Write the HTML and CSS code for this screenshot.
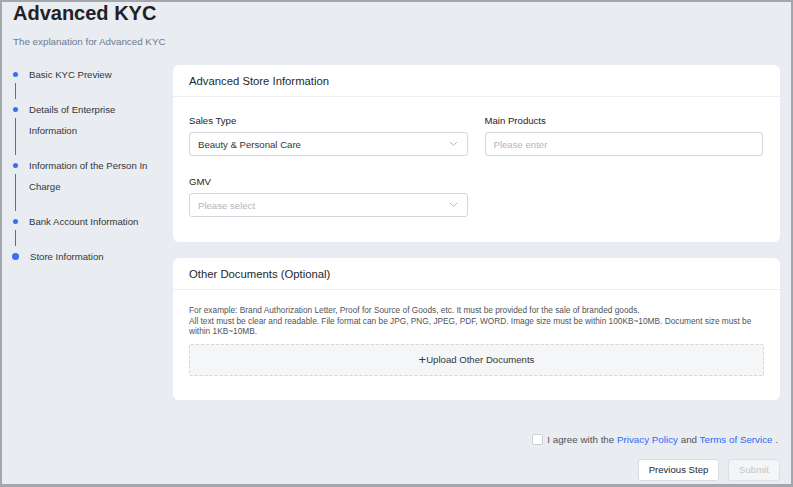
FILE: index.html
```html
<!DOCTYPE html>
<html lang="en">
<head>
  <meta charset="utf-8">
  <meta name="viewport" content="width=device-width, initial-scale=1.0">
  <title>Advanced KYC</title>
  <link rel="stylesheet" href="styles.css">
</head>
<body>
  <div class="page">
    <h1 class="title">Advanced KYC</h1>
    <p class="subtitle">The explanation for Advanced KYC</p>

    <div class="layout">
      <ul class="steps">
        <li class="step">
          <div class="marker"><span class="dot"></span><span class="tail"></span></div>
          <div class="step-text">Basic KYC Preview</div>
        </li>
        <li class="step">
          <div class="marker"><span class="dot"></span><span class="tail"></span></div>
          <div class="step-text">Details of Enterprise Information</div>
        </li>
        <li class="step">
          <div class="marker"><span class="dot"></span><span class="tail"></span></div>
          <div class="step-text">Information of the Person In Charge</div>
        </li>
        <li class="step">
          <div class="marker"><span class="dot"></span><span class="tail"></span></div>
          <div class="step-text">Bank Account Information</div>
        </li>
        <li class="step active">
          <div class="marker"><span class="dot"></span></div>
          <div class="step-text">Store Information</div>
        </li>
      </ul>

      <main class="main">
        <section class="card">
          <div class="card-header">Advanced Store Information</div>
          <div class="card-body form-grid">
            <div class="field">
              <label class="label">Sales Type</label>
              <div class="select">
                <span>Beauty &amp; Personal Care</span>
                <svg class="arrow" width="9" height="6" viewBox="0 0 9 6"><path d="M1 1l3.5 3.5L8 1" fill="none" stroke="#b4b8c0" stroke-width="1"/></svg>
              </div>
            </div>
            <div class="field">
              <label class="label">Main Products</label>
              <div class="input placeholder">Please enter</div>
            </div>
            <div class="field">
              <label class="label">GMV</label>
              <div class="select placeholder">
                <span>Please select</span>
                <svg class="arrow" width="9" height="6" viewBox="0 0 9 6"><path d="M1 1l3.5 3.5L8 1" fill="none" stroke="#b4b8c0" stroke-width="1"/></svg>
              </div>
            </div>
          </div>
        </section>

        <section class="card">
          <div class="card-header">Other Documents (Optional)</div>
          <div class="card-body docs">
            <p class="hint">For example: Brand Authorization Letter, Proof for Source of Goods, etc. It must be provided for the sale of branded goods.<br>All text must be clear and readable. File format can be JPG, PNG, JPEG, PDF, WORD. Image size must be within 100KB~10MB. Document size must be within 1KB~10MB.</p>
            <div class="upload"><span class="plus">+</span>Upload Other Documents</div>
          </div>
        </section>

        <div class="agree">
          <span class="checkbox"></span>
          <span>I agree with the <a href="#">Privacy Policy</a> and <a href="#">Terms of Service</a> .</span>
        </div>

        <div class="actions">
          <button class="btn">Previous Step</button>
          <button class="btn disabled">Submit</button>
        </div>
      </main>
    </div>
  </div>
</body>
</html>
```

FILE: styles.css
```css
* {
  box-sizing: border-box;
}

body {
  margin: 0;
  font-family: "Liberation Sans", Arial, sans-serif;
  color: #25282d;
}

.page {
  width: 793px;
  height: 487px;
  overflow: hidden;
  background-color: #e9ecf0;
  border: 2px solid #a3a6ab;
  border-bottom-width: 3px;
  padding: 0 11px 0 11px;
}

.title {
  margin: 0;
  font-size: 20px;
  line-height: 22px;
  font-weight: bold;
  color: #1f2126;
}

.subtitle {
  margin: 11px 0 0;
  font-size: 9.8px;
  line-height: 14px;
  color: #6c7896;
}

.layout {
  display: flex;
  margin-top: 15px;
}

/* steps */
.steps {
  list-style: none;
  margin: 0;
  padding: 0;
  width: 160px;
  flex-shrink: 0;
}

.step {
  display: flex;
  gap: 11px;
  padding-bottom: 14px;
}

.marker {
  width: 5px;
  display: flex;
  flex-direction: column;
  align-items: center;
  margin-bottom: -14px;
}

.dot {
  width: 5px;
  height: 5px;
  border-radius: 50%;
  background-color: #3a6cf4;
  margin-top: 8px;
}

.tail {
  flex: 1;
  width: 1px;
  background-color: #3a6cf4;
  margin-top: 6px;
}

.step-text {
  width: 125px;
  font-size: 9.6px;
  line-height: 21px;
  color: #33363b;
}

.step.active .dot {
  width: 7px;
  height: 7px;
  margin-top: 7px;
}

.step.active .step-text {
  margin-left: 1px;
}

/* cards */
.main {
  flex: 1;
  display: flex;
  flex-direction: column;
  gap: 16px;
  padding-top: 1px;
}

.card {
  background-color: #fff;
  border-radius: 6px;
}

.card-header {
  height: 32px;
  padding: 0 16px;
  display: flex;
  align-items: center;
  font-size: 11.3px;
  color: #25282d;
  border-bottom: 1px solid #edeff2;
}

.card-body {
  padding: 17px 17px 25px 16px;
}

.form-grid {
  display: grid;
  grid-template-columns: 1fr 1fr;
  column-gap: 17px;
  row-gap: 19px;
}

.label {
  display: block;
  font-size: 9.6px;
  line-height: 14px;
  margin-bottom: 4px;
  color: #1f2126;
}

.input,
.select {
  height: 24px;
  border: 1px solid #d4d7df;
  border-radius: 3px;
  padding: 0 8px;
  display: flex;
  align-items: center;
  justify-content: space-between;
  font-size: 9.6px;
  color: #33363b;
}

.placeholder {
  color: #b3b6bc;
}

.arrow {
  margin-right: 1px;
}

.docs {
  padding: 15px 16px 24px 16px;
}

.hint {
  margin: 0;
  font-size: 8.3px;
  line-height: 10.5px;
  color: #4f535a;
}

.upload {
  margin-top: 7px;
  height: 32px;
  border: 1px dashed #d4d7df;
  border-radius: 2px;
  background-color: #f5f6f8;
  display: flex;
  align-items: center;
  justify-content: center;
  font-size: 9.6px;
  color: #33363b;
}

.plus {
  font-size: 13px;
  line-height: 10px;
}

/* footer */
.agree {
  margin-top: 18px;
  display: flex;
  align-items: center;
  justify-content: flex-end;
  gap: 4px;
  font-size: 9.8px;
  color: #4f535a;
  padding-right: 2px;
}

.agree a {
  color: #2f6bf6;
  text-decoration: none;
}

.checkbox {
  width: 11px;
  height: 11px;
  border: 1px solid #ccd0d6;
  border-radius: 2px;
  background-color: #fff;
}

.actions {
  margin-top: -2px;
  display: flex;
  justify-content: flex-end;
  gap: 9px;
}

.btn {
  height: 22px;
  padding: 0;
  white-space: nowrap;
  border: 1px solid #d9dce1;
  border-radius: 3px;
  background-color: #fff;
  font-family: inherit;
  font-size: 9.6px;
  color: #25282d;
}

.btn:first-child {
  width: 81px;
}

.btn.disabled {
  width: 52px;
  background-color: #f4f5f7;
  color: #c2c5ca;
  border-color: #dcdfe3;
}
```
